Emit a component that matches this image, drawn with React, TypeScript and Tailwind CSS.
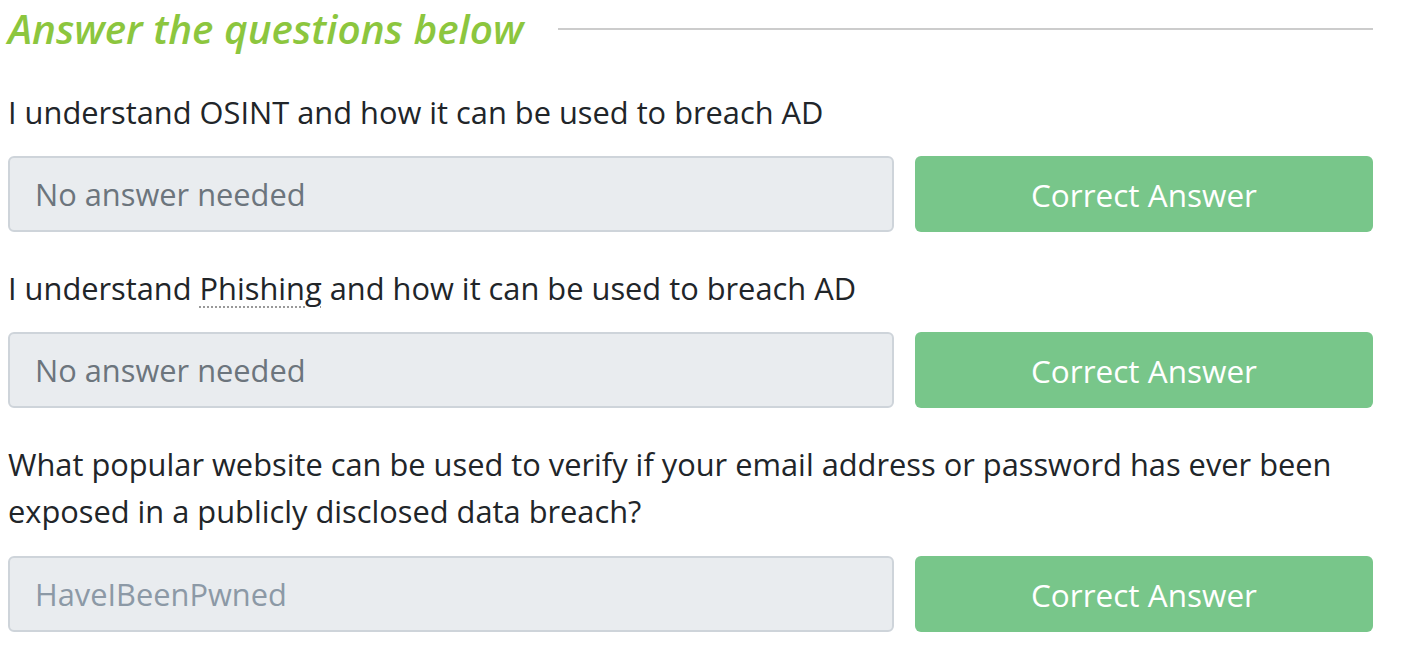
import React from "react";

const font = { fontFamily: '"Open Sans", "Noto Sans", sans-serif' };

function Row({ value, filled, top = "mt-[20px]" }: { value: string; filled?: boolean; top?: string }) {
  return (
    <div className={"flex gap-[21px] " + top}>
      <div className="flex-1 h-[76px] rounded-[6px] border-2 border-[#ced4da] bg-[#e9ecef] flex items-center pl-[25px]">
        <span className={filled ? "text-[#8c99a6]" : "text-[#6c757d]"}>{value}</span>
      </div>
      <div className="w-[458px] h-[76px] rounded-[6px] bg-[#78c68a] text-white flex items-center justify-center text-[31.5px]">
        Correct Answer
      </div>
    </div>
  );
}

export default function App() {
  return (
    <div className="bg-white w-[1402px] h-[660px] pl-[8px] pr-[29px] text-[#212529] text-[30.8px] leading-[47px]" style={font}>
      <div className="flex items-center h-[58px]">
        <span className="italic font-semibold text-[#8cc63e] text-[40.5px] leading-[58px]">Answer the questions below</span>
        <div className="flex-1 h-[2px] bg-[#cccccc] ml-[35px]" />
      </div>
      <div className="mt-[31px]">I understand OSINT and how it can be used to breach AD</div>
      <Row value="No answer needed" />
      <div className="mt-[33px]">
        I understand{" "}
        <span className="underline decoration-dotted decoration-[#999] decoration-2 underline-offset-[6px]">Phishing</span>{" "}
        and how it can be used to breach AD
      </div>
      <Row value="No answer needed" />
      <div className="mt-[33px] pr-[20px]">
        What popular website can be used to verify if your email address or password has ever been exposed in a publicly disclosed data breach?
      </div>
      <Row value="HaveIBeenPwned" filled top="mt-[21px]" />
    </div>
  );
}
